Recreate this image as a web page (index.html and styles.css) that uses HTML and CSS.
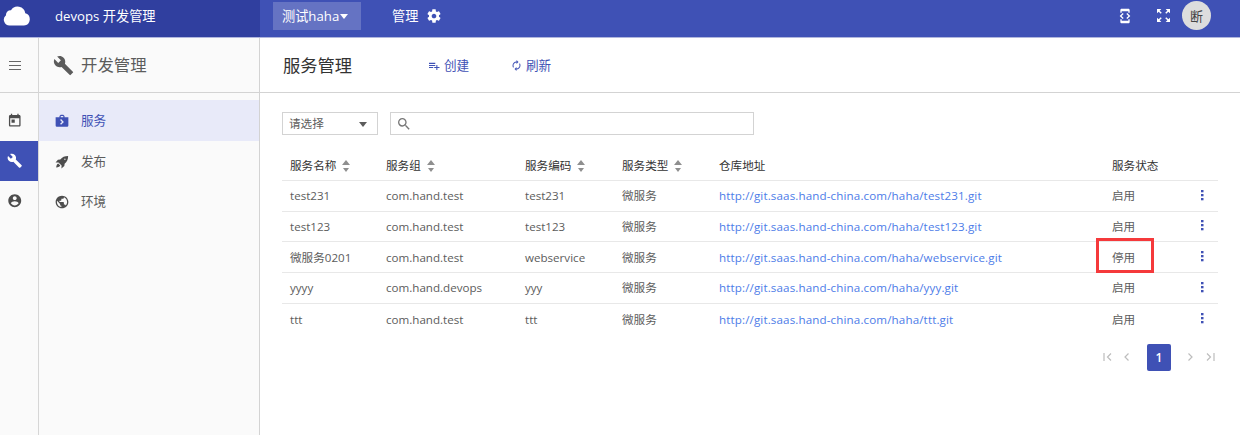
FILE: index.html
```html
<!DOCTYPE html>
<html lang="zh-CN">
<head>
<meta charset="utf-8">
<title>服务管理</title>
<link rel="stylesheet" href="styles.css">
</head>
<body>
<svg class="defs" aria-hidden="true">
  <symbol id="build" viewBox="0 0 24 24"><path d="M22.7 19l-9.1-9.1c.9-2.3.4-5-1.5-6.9-2-2-5-2.4-7.4-1.3L9 6 6 9 1.6 4.7C.4 7.1.9 10.1 2.900 12.100c1.900 1.900 4.600 2.400 6.900 1.500l9.100 9.100c.4.4 1 .4 1.400 0l2.300-2.300c.5-.4.5-1.100.1-1.400z"/></symbol>
  <symbol id="dots" viewBox="0 0 4 12"><rect x="1" y="1" width="2.500" height="2.300"/><rect x="1" y="5" width="2.500" height="2.300"/><rect x="1" y="9" width="2.500" height="2.300"/></symbol>
  <symbol id="sort" viewBox="0 0 8 12"><path d="M4 0l4 5H0zM4 12L1 8h6z"/></symbol>
</svg>
<header class="topbar">
  <div class="brand">
    <svg class="cloud" viewBox="0 0 26 20"><path d="M6 19.500a5.800 5.800 0 0 1-3.500-10.300A4.600 4.600 0 0 1 7.500 4.300 7.800 7.800 0 0 1 21.800 7.200 6.300 6.300 0 0 1 20.500 19.500z"/></svg>
    <span>devops 开发管理</span>
  </div>
  <div class="project">测试haha<i class="caret"></i></div>
  <div class="manage">管理
    <svg class="gear" viewBox="0 0 24 24"><path d="M19.430 12.980c.04-.32.07-.64.07-.98s-.03-.66-.07-.98l2.110-1.650c.19-.15.24-.42.12-.64l-2-3.460c-.12-.22-.39-.3-.61-.22l-2.490 1c-.52-.4-1.080-.73-1.690-.98l-.38-2.650C14.460 2.180 14.250 2 14 2h-4c-.25 0-.46.18-.49.42l-.38 2.650c-.61.25-1.170.59-1.690.98l-2.490-1c-.23-.09-.49 0-.61.22l-2 3.460c-.13.22-.07.49.12.64l2.110 1.650c-.04.32-.07.65-.07.98s.03.66.07.98l-2.110 1.650c-.19.15-.24.42-.12.64l2 3.460c.12.22.39.3.61.22l2.490-1c.52.4 1.080.73 1.690.98l.38 2.650c.03.24.24.42.49.42h4c.25 0 .46-.18.49-.42l.38-2.650c.61-.25 1.170-.59 1.690-.98l2.490 1c.23.09.49 0 .61-.22l2-3.460c.12-.22.07-.49-.12-.64l-2.110-1.650zM12 15.500c-1.930 0-3.500-1.570-3.500-3.500s1.570-3.500 3.500-3.500 3.500 1.570 3.500 3.500-1.570 3.500-3.500 3.500z"/></svg>
  </div>
  <div class="tools">
    <svg class="device" viewBox="3 0 18 24"><path d="M7 5h10v2h2V3c0-1.100-.9-1.990-2-1.990L7 1c-1.100 0-2 .9-2 2v4h2V5zm8.410 11.590L20 12l-4.590-4.590L14 8.830 17.170 12 14 15.170l1.410 1.420zM10 15.170L6.830 12 10 8.830 8.590 7.410 4 12l4.590 4.590L10 15.170zM17 19H7v-2H5v4c0 1.100.9 2 2 2h10c1.100 0 2-.9 2-2v-4h-2v2z"/></svg>
    <svg class="expand" viewBox="3 3 18 18"><path d="M15 3l2.300 2.300-2.890 2.870 1.420 1.420L18.700 6.700 21 9V3zM3 9l2.300-2.300 2.870 2.890 1.420-1.420L6.700 5.300 9 3H3zm6 12l-2.300-2.300 2.890-2.870-1.420-1.420L5.300 17.300 3 15v6zm12-6l-2.300 2.300-2.870-2.890-1.420 1.420 2.890 2.870L15 21h6z"/></svg>
    <span class="avatar">断</span>
  </div>
</header>
<div class="body">
  <nav class="rail">
    <div class="rail-top"><svg class="menu" viewBox="0 0 12 9"><path d="M0 .5h12M0 4.500h12M0 8.500h12"/></svg></div>
    <div class="rail-item"><svg class="ic" viewBox="0 0 24 24"><path d="M19 3h-1V1h-2v2H8V1H6v2H5c-1.110 0-1.990.9-1.990 2L3 19c0 1.100.89 2 2 2h14c1.100 0 2-.9 2-2V5c0-1.100-.9-2-2-2zm0 16H5V8h14v11zM7 10h5v5H7z"/></svg></div>
    <div class="rail-item on"><svg class="ic"><use href="#build"/></svg></div>
    <div class="rail-item"><svg class="ic" viewBox="0 0 24 24"><path d="M12 2C6.480 2 2 6.480 2 12s4.480 10 10 10 10-4.480 10-10S17.520 2 12 2zm0 3c1.660 0 3 1.340 3 3s-1.340 3-3 3-3-1.340-3-3 1.340-3 3-3zm0 14.200c-2.500 0-4.710-1.280-6-3.220.03-1.990 4-3.080 6-3.080 1.990 0 5.970 1.090 6 3.080-1.290 1.940-3.500 3.220-6 3.220z"/></svg></div>
  </nav>
  <aside class="side">
    <div class="side-title"><svg class="wrench"><use href="#build"/></svg>开发管理</div>
    <div class="side-item on"><svg class="ic" viewBox="1 1 22 22"><path fill-rule="evenodd" d="M16 6V4l-2-2h-4L8 4v2H2v13q0 2 2 2h16q2 0 2-2V6zM10 4h4v2h-4zM10.500 9l4.500 4.500-4.500 4.500-1.500-1.500 3-3-3-3z"/></svg>服务</div>
    <div class="side-item"><svg class="ic" viewBox="0 0 24 24"><path fill-rule="evenodd" d="M22.500 1.500c-6 0-10 2-13.500 6L5 8 1 13l5-.3 5.300 5.300-.3 5 5-4 .5-4C20.500 11.500 22.500 7.500 22.500 1.500zM17 6.200a1.100 1.100 0 1 1 0 2.200 1.100 1.100 0 0 1 0-2.200zM5.500 14.500c-2 .5-3 3-3.500 7 4-.5 6.500-1.500 7-3.500z"/></svg>发布</div>
    <div class="side-item"><svg class="ic" viewBox="1 1 22 22"><path d="M12 2C6.480 2 2 6.480 2 12s4.480 10 10 10 10-4.480 10-10S17.520 2 12 2zm-1 17.930c-3.950-.49-7-3.850-7-7.930 0-.62.08-1.210.21-1.790L9 15v1c0 1.100.9 2 2 2v1.930zm6.900-2.540c-.26-.81-1-1.390-1.900-1.390h-1v-3c0-.55-.45-1-1-1H8v-2h2c.55 0 1-.45 1-1V7h2c1.100 0 2-.9 2-2v-.41c2.930 1.190 5 4.060 5 7.410 0 2.080-.8 3.970-2.100 5.390z"/></svg>环境</div>
  </aside>
  <main class="main">
    <div class="page-head">
      <h1>服务管理</h1>
      <a class="action create"><svg viewBox="2 5 21 14"><path d="M14 10H2v2h12v-2zm0-4H2v2h12V6zm4 8v-4h-2v4h-4v2h4v4h2v-4h4v-2h-4zM2 16h8v-2H2v2z"/></svg>创建</a>
      <a class="action reload"><svg viewBox="3 1 18 22"><path d="M12 6v3l4-4-4-4v3c-4.420 0-8 3.580-8 8 0 1.570.46 3.030 1.240 4.260L6.700 14.800A5.870 5.870 0 0 1 6 12c0-3.310 2.690-6 6-6zm6.760 1.740L17.300 9.200c.44.84.7 1.790.7 2.800 0 3.310-2.690 6-6 6v-3l-4 4 4 4v-3c4.420 0 8-3.580 8-8 0-1.570-.46-3.030-1.240-4.260z"/></svg>刷新</a>
    </div>
    <div class="filters">
      <div class="select">请选择<i class="caret"></i></div>
      <div class="search"><svg viewBox="3 3 18 18"><path d="M15.500 14h-.79l-.28-.27A6.471 6.471 0 0 0 16 9.500 6.500 6.500 0 1 0 9.500 16c1.610 0 3.090-.59 4.230-1.570l.27.28v.79l5 4.990L20.490 19l-4.990-5zm-6 0C7.010 14 5 11.990 5 9.500S7.010 5 9.500 5 14 7.010 14 9.500 11.990 14 9.500 14z"/></svg></div>
    </div>
    <div class="table">
      <div class="row head"><span>服务名称<svg class="sort"><use href="#sort"/></svg></span><span>服务组<svg class="sort"><use href="#sort"/></svg></span><span>服务编码<svg class="sort"><use href="#sort"/></svg></span><span>服务类型<svg class="sort"><use href="#sort"/></svg></span><span>仓库地址</span><span>服务状态</span><span></span></div>
      <div class="row"><span>test231</span><span>com.hand.test</span><span>test231</span><span>微服务</span><a>http://git.saas.hand-china.com/haha/test231.git</a><span>启用</span><svg class="more"><use href="#dots"/></svg></div>
      <div class="row"><span>test123</span><span>com.hand.test</span><span>test123</span><span>微服务</span><a>http://git.saas.hand-china.com/haha/test123.git</a><span>启用</span><svg class="more"><use href="#dots"/></svg></div>
      <div class="row"><span>微服务0201</span><span>com.hand.test</span><span>webservice</span><span>微服务</span><a>http://git.saas.hand-china.com/haha/webservice.git</a><span class="marked">停用</span><svg class="more"><use href="#dots"/></svg></div>
      <div class="row"><span>yyyy</span><span>com.hand.devops</span><span>yyy</span><span>微服务</span><a>http://git.saas.hand-china.com/haha/yyy.git</a><span>启用</span><svg class="more"><use href="#dots"/></svg></div>
      <div class="row"><span>ttt</span><span>com.hand.test</span><span>ttt</span><span>微服务</span><a>http://git.saas.hand-china.com/haha/ttt.git</a><span>启用</span><svg class="more"><use href="#dots"/></svg></div>
    </div>
    <div class="pager">
      <svg class="edge" viewBox="0 0 9 8"><path d="M1 0v8M8 .5L4.500 4 8 7.500"/></svg>
      <svg class="step" viewBox="0 0 5 8"><path d="M4.500.5L1 4l3.500 3.500"/></svg>
      <span class="current">1</span>
      <svg class="step" viewBox="0 0 5 8"><path d="M.5.5L4 4 .5 7.500"/></svg>
      <svg class="edge" viewBox="0 0 9 8"><path d="M8 0v8M1 .5L4.500 4 1 7.500"/></svg>
    </div>
  </main>
</div>
</body>
</html>
```
FILE: styles.css
```css
*, *::after { box-sizing: border-box; }
body {
  margin: 0;
  height: 435px;
  overflow: hidden;
  display: flex;
  flex-direction: column;
  background: #fff;
  color: #5c5c5c;
  font: 12px/16px "Open Sans", "Noto Sans CJK SC", sans-serif;
}
svg { fill: currentColor; flex: none; display: block; }
.defs { position: absolute; width: 0; height: 0; }
.topbar {
  height: 38px;
  flex: none;
  display: flex;
  background: #3f51b5;
  border-bottom: 1px solid #b0b6dd;
  color: #fff;
  font-size: 13.2px;
}
.brand {
  width: 260px;
  display: flex;
  align-items: center;
  padding: 0 0 6px 3px;
  background: #303f9f;
}
.brand span { padding-top: 1px; }
.cloud { width: 27px; height: 20px; margin-right: 25px; }
.project {
  width: 88px;
  height: 28px;
  margin: 2px 0 0 13px;
  padding: 0 0 0 9px;
  display: flex;
  align-items: center;
  background: #6573c3;
}
.caret {
  border: 4px solid transparent;
  border-top: 5px solid currentColor;
  border-bottom: 0;
}
.project .caret { margin-left: 1px; }
.manage { display: flex; align-items: center; margin-left: 31px; padding-bottom: 5px; }
.gear { width: 16px; height: 16px; margin-left: 8px; }
.tools { display: flex; align-items: center; margin-left: auto; padding: 0 29px 6px 0; }
.device { width: 12px; height: 16px; margin-right: 26px; }
.expand { width: 13px; height: 13px; margin-right: 12px; }
.avatar {
  width: 29px;
  height: 29px;
  border-radius: 50%;
  background: #ddd;
  color: #444;
  text-align: center;
  line-height: 30px;
  font-size: 13px;
}
.body { flex: 1; display: flex; }
.rail { width: 39px; background: #fafafa; border-right: 1px solid #d6d6d6; color: #4d4d4d; }
.rail-top { height: 55px; margin-bottom: 8px; padding: 23px 0 0 9px; border-bottom: 1px solid #d3d3d3; }
.menu { width: 12px; height: 9px; stroke: #666; stroke-width: 1.2; }
.rail-item { height: 40px; padding: 12px 0 0 7px; }
.rail-item .ic { width: 15.5px; height: 15.5px; }
.on { color: #3f51b5; }
.rail-item.on { background: #3f51b5; color: #fff; }
.ic { width: 14px; height: 14px; }
.side { width: 221px; background: #fafafa; border-right: 1px solid #d3d3d3; font-size: 12.6px; }
.side-title {
  height: 55px;
  margin-bottom: 7px;
  padding-left: 14px;
  display: flex;
  align-items: center;
  border-bottom: 1px solid #d3d3d3;
  font-size: 16.4px;
}
.wrench { width: 21px; height: 21px; margin-right: 7px; }
.side-item { height: 40px; padding: 1px 0 0 16px; display: flex; align-items: center; gap: 12px; }
.side-item .ic { color: #4d4d4d; }
.side-item.on { height: 41px; background: #e8eaf9; }
.side-item.on .ic { color: #3f51b5; }
.main { flex: 1; display: flex; flex-direction: column; }
.page-head {
  height: 55px;
  flex: none;
  display: flex;
  align-items: center;
  padding: 1px 0 0 23px;
  border-bottom: 1px solid #d3d3d3;
}
h1 { width: 146px; margin: 0; font-size: 17.3px; font-weight: 400; color: #333; }
.action { display: flex; align-items: center; color: #3f51b5; font-size: 12.6px; }
.create { width: 82px; }
.action svg { width: 11px; height: 11px; margin-right: 4px; }
.create svg { height: 8px; }
.filters { display: flex; gap: 12px; margin: 19px 0 0 22px; }
.select {
  width: 96px;
  height: 23px;
  padding: 1px 10px 0 6px;
  display: flex;
  align-items: center;
  justify-content: space-between;
  border: 1px solid #d3d3d3;
  font-size: 11.6px;
}
.search { width: 364px; height: 23px; padding: 5px 7px; border: 1px solid #d3d3d3; color: #777; }
.search svg { width: 12px; height: 12px; }
.table { width: 936px; margin: 15px 0 0 22px; font-size: 11.6px; }
.row {
  display: grid;
  grid-template-columns: 96px 139px 97px 97px 393px 86px 1fr;
  align-items: center;
  height: 30.75px;
  padding: 1px 0 0 8px;
  border-bottom: 1px solid #e8e8e8;
}
.row:last-child { border: 0; }
.head { padding-top: 2px; color: #333; }
.head span { display: flex; align-items: center; }
.sort { width: 8px; height: 12px; margin-left: 6px; color: #8f8f8f; }
.row a { color: #4d7ce8; letter-spacing: .13px; }
.more { width: 4px; height: 12px; margin: 0 0 3px 2px; color: #3f51b5; }
.marked { position: relative; }
.marked::after {
  content: "";
  position: absolute;
  left: -16px;
  top: -12px;
  width: 58px;
  height: 35px;
  border: 3px solid #f5393b;
}
.pager { display: flex; align-items: center; margin: 9px 0 0 843px; color: #bdbdbd; }
.pager svg { fill: none; stroke: currentColor; stroke-width: 1.2; }
.edge { width: 9px; height: 8px; }
.step { width: 5px; height: 8px; }
.edge + .step { margin-left: 12px; }
.step + .edge { margin-left: 13px; }
.current {
  width: 24px;
  height: 27px;
  margin: 0 17px 0 18px;
  border-radius: 2px;
  background: #3f51b5;
  color: #fff;
  text-align: center;
  line-height: 27px;
  font-weight: 600;
}
```
